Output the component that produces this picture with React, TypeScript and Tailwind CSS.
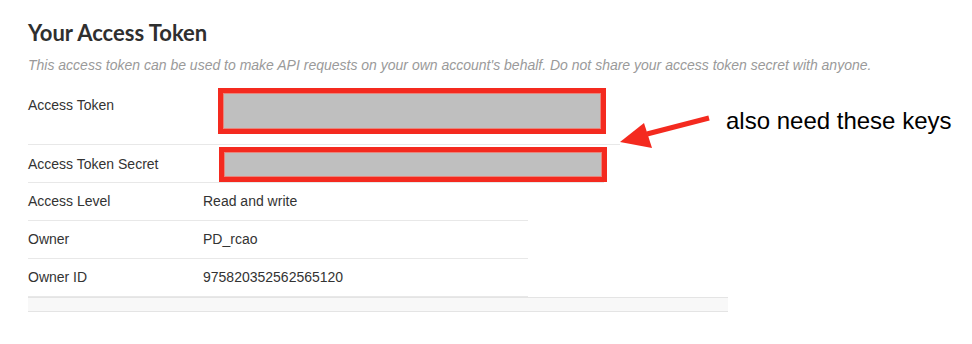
const rows = [
  { label: "Access Level", value: "Read and write" },
  { label: "Owner", value: "PD_rcao" },
  { label: "Owner ID", value: "975820352562565120" },
];

function RedactedBox({ height }: { height: string }) {
  return (
    <div className={`w-[388px] shrink-0 border-[5px] border-[#f42a1f] ${height}`}>
      <div className="h-full w-full border border-[#e9857c] bg-[#bfbfbf]" />
    </div>
  );
}

export default function App() {
  return (
    <div className="relative h-[344px] w-[972px] bg-white font-['Liberation_Sans',Arial,sans-serif] text-[#333]">
      <div className="pl-[28px] pt-[19px]">
        <h2 className="font-['Lato',sans-serif] text-[22px] font-bold leading-[28px] text-[#2f2f2f]">
          Your Access Token
        </h2>
        <p className="mt-[9px] text-[14px] italic leading-[18px] text-[#9a9a9a]">
          This access token can be used to make API requests on your own
          account's behalf. Do not share your access token secret with anyone.
        </p>

        <div className="mt-[13px] text-[14px]">
          <div className="flex h-[58px] w-[592px] border-b border-[#e8e8e8]">
            <div className="w-[175px] shrink-0 pt-[8px] leading-[20px]">Access Token</div>
            <div className="shrink-0 pl-[15px] pt-[1px]">
              <RedactedBox height="h-[46px]" />
            </div>
          </div>
          <div className="flex h-[38px] w-[576px] border-b border-[#e8e8e8]">
            <div className="w-[175px] shrink-0 self-center leading-[20px]">
              Access Token Secret
            </div>
            <div className="shrink-0 pl-[16px] pt-[2px]">
              <RedactedBox height="h-[35px]" />
            </div>
          </div>
          {rows.map((row) => (
            <div
              key={row.label}
              className="flex h-[38px] w-[500px] items-center border-b border-[#e8e8e8]"
            >
              <div className="w-[175px] shrink-0">{row.label}</div>
              <div>{row.value}</div>
            </div>
          ))}
          <div className="h-[15px] w-[700px] border-y border-[#e4e4e4] bg-[#f8f8f8]" />
        </div>
      </div>

      <svg
        className="absolute left-[612px] top-[110px]"
        width="104"
        height="44"
        viewBox="0 0 104 44"
      >
        <line x1="97" y1="8" x2="35" y2="24" stroke="#f42a1f" strokeWidth="5" />
        <polygon points="8,32 32,13 40,38" fill="#f42a1f" />
      </svg>
      <div className="absolute left-[726px] top-[106px] text-[24px] leading-[30px] text-black">
        also need these keys
      </div>
    </div>
  );
}
